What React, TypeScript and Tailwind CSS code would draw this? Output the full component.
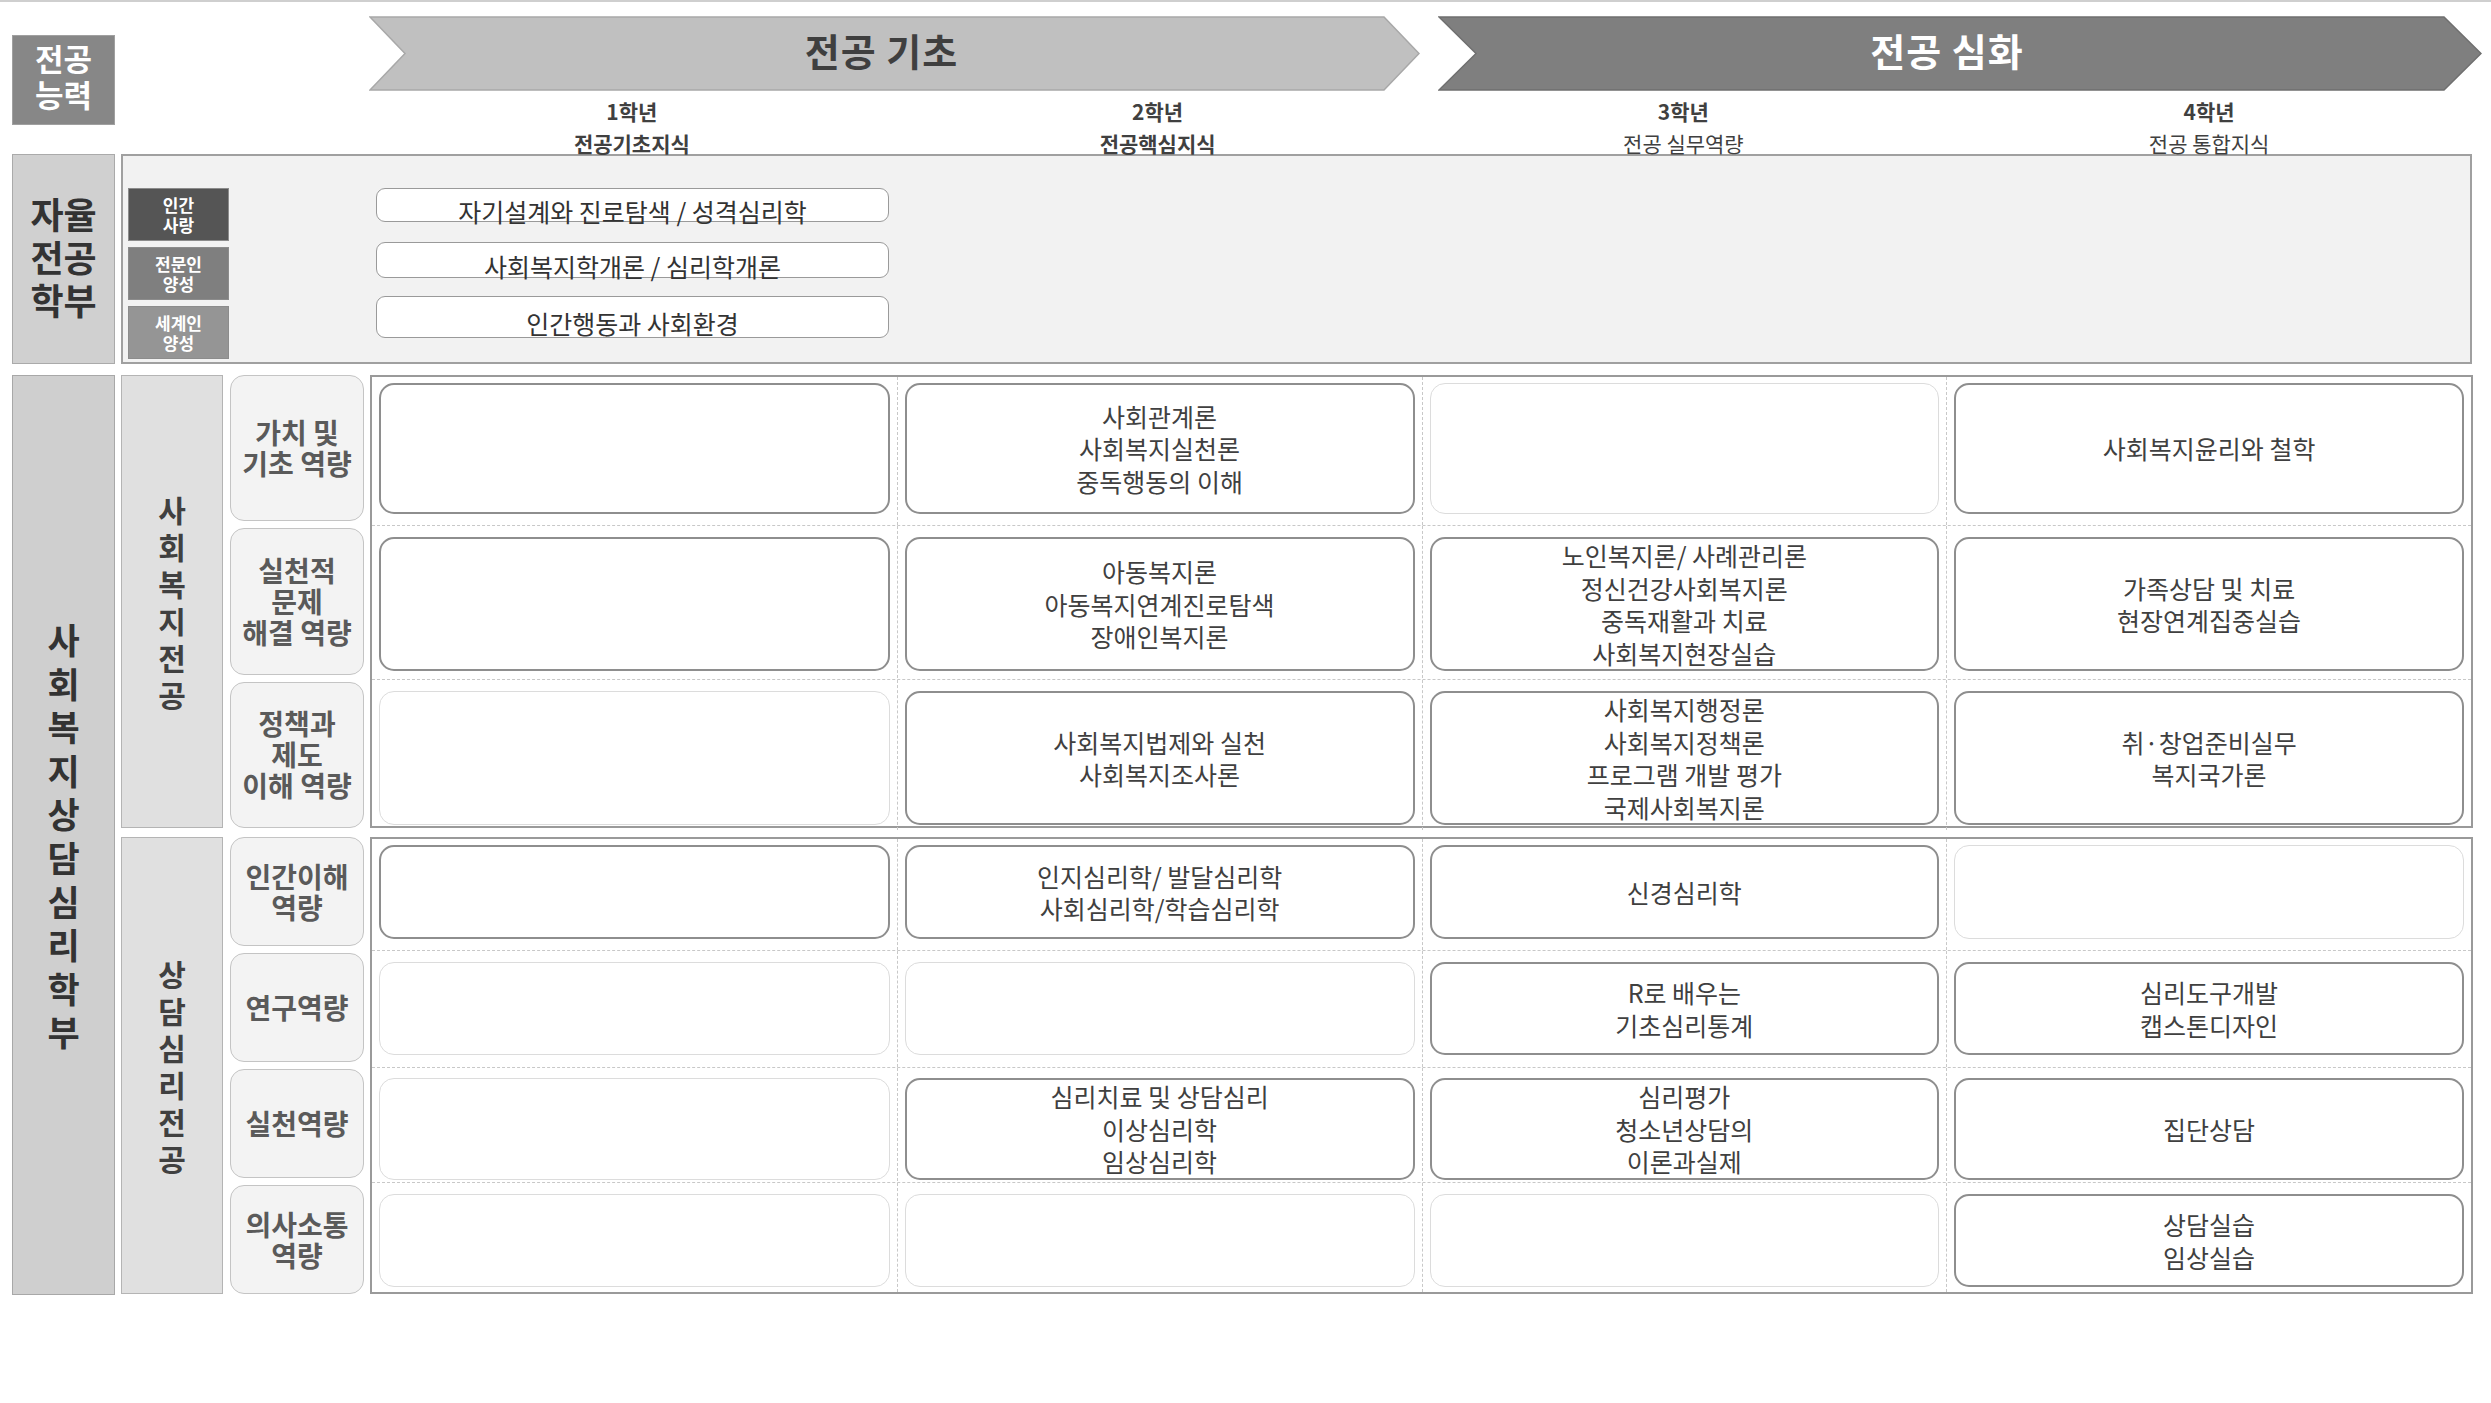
import React from 'react';

const FONT = "font-['Noto_Sans_CJK_KR','Noto_Sans',sans-serif]";

type Cell = { lines?: string[]; dark?: boolean };
type Row = { label: string[]; h: string; pad: string; cells: Cell[] };

const welfareRows: Row[] = [
  {
    label: ['가치 및', '기초 역량'],
    h: 'h-[148px]',
    pad: 'pt-[6px] pb-[11px]',
    cells: [
      { dark: true },
      { dark: true, lines: ['사회관계론', '사회복지실천론', '중독행동의 이해'] },
      {},
      { dark: true, lines: ['사회복지윤리와 철학'] },
    ],
  },
  {
    label: ['실천적', '문제', '해결 역량'],
    h: 'h-[154px]',
    pad: 'pt-[11px] pb-[12px]',
    cells: [
      { dark: true },
      { dark: true, lines: ['아동복지론', '아동복지연계진로탐색', '장애인복지론'] },
      { dark: true, lines: ['노인복지론/ 사례관리론', '정신건강사회복지론', '중독재활과 치료', '사회복지현장실습'] },
      { dark: true, lines: ['가족상담 및 치료', '현장연계집중실습'] },
    ],
  },
  {
    label: ['정책과', '제도', '이해 역량'],
    h: 'h-[147px]',
    pad: 'pt-[11px] pb-[5px]',
    cells: [
      {},
      { dark: true, lines: ['사회복지법제와 실천', '사회복지조사론'] },
      { dark: true, lines: ['사회복지행정론', '사회복지정책론', '프로그램 개발 평가', '국제사회복지론'] },
      { dark: true, lines: ['취·창업준비실무', '복지국가론'] },
    ],
  },
];

const counselRows: Row[] = [
  {
    label: ['인간이해', '역량'],
    h: 'h-[111px]',
    pad: 'pt-[6px] pb-[11px]',
    cells: [
      { dark: true },
      { dark: true, lines: ['인지심리학/ 발달심리학', '사회심리학/학습심리학'] },
      { dark: true, lines: ['신경심리학'] },
      {},
    ],
  },
  {
    label: ['연구역량'],
    h: 'h-[117px]',
    pad: 'pt-[11px] pb-[12px]',
    cells: [{}, {}, { dark: true, lines: ['R로 배우는', '기초심리통계'] }, { dark: true, lines: ['심리도구개발', '캡스톤디자인'] }],
  },
  {
    label: ['실천역량'],
    h: 'h-[115px]',
    pad: 'pt-[10px] pb-[11px]',
    cells: [
      {},
      { dark: true, lines: ['심리치료 및 상담심리', '이상심리학', '임상심리학'] },
      { dark: true, lines: ['심리평가', '청소년상담의', '이론과실제'] },
      { dark: true, lines: ['집단상담'] },
    ],
  },
  {
    label: ['의사소통', '역량'],
    h: 'h-[110px]',
    pad: 'pt-[11px] pb-[5px]',
    cells: [{}, {}, {}, { dark: true, lines: ['상담실습', '임상실습'] }],
  },
];

function Chevron({ width, depth, fill, stroke, children, textClass }: { width: number; depth: number; fill: string; stroke: string; children: React.ReactNode; textClass: string }) {
  const h = 75;
  const pts = `1,1 ${width - depth},1 ${width - 1},${h / 2} ${width - depth},${h - 1} 1,${h - 1} ${depth},${h / 2}`;
  return (
    <div className="relative h-[75px] shrink-0" style={{ width }}>
      <svg className="absolute inset-0" width={width} height={h} viewBox={`0 0 ${width} ${h}`}>
        <polygon points={pts} fill={fill} stroke={stroke} strokeWidth="1.5" />
      </svg>
      <div className={`relative h-full flex items-center justify-center pr-[26px] pb-[8px] text-[38px] font-bold tracking-[1px] ${textClass}`}>{children}</div>
    </div>
  );
}

function CourseCard({ cell }: { cell: Cell }) {
  return (
    <div
      className={`h-full rounded-[15px] bg-white flex flex-col items-center justify-center text-[25px] leading-[32.5px] text-[#404040] ${
        cell.dark ? 'border-2 border-[#8e8e8e]' : 'border-[1.5px] border-[#dcdcdc]'
      }`}
    >
      {cell.lines?.map((l) => (
        <span key={l} className="whitespace-nowrap">{l}</span>
      ))}
    </div>
  );
}

function Block({ title, rows }: { title: string; rows: Row[] }) {
  return (
    <div className="flex gap-[6px] h-full">
      {/* major label */}
      <div className="w-[102px] shrink-0 bg-[#e0e0e0] border-[1.5px] border-[#b4b4b4] flex flex-col items-center justify-center text-[30px] leading-[37px] font-bold text-[#404040]">
        {title.split('').map((c, i) => (
          <span key={i}>{c}</span>
        ))}
      </div>
      {/* competency labels */}
      <div className="w-[134px] shrink-0 flex flex-col gap-[7px] ml-[1px]">
        {rows.map((r) => (
          <div
            key={r.label.join('')}
            className="flex-1 rounded-[14px] bg-[#f3f3f3] border-[1.5px] border-[#c4c4c4] flex flex-col items-center justify-center text-[28px] leading-[31px] font-semibold text-[#5a5a5a]"
          >
            {r.label.map((l) => (
              <span key={l} className="whitespace-nowrap">{l}</span>
            ))}
          </div>
        ))}
      </div>
      {/* course grid */}
      <div className="w-[2103px] shrink-0 border-2 border-[#9a9a9a] bg-white flex flex-col">
        {rows.map((r, ri) => (
          <div key={ri} className={`${r.h} grid grid-cols-4 ${ri > 0 ? 'border-t border-dashed border-[#c8c8c8]' : ''}`}>
            {r.cells.map((c, ci) => (
              <div key={ci} className={`px-[7px] ${r.pad} ${ci > 0 ? 'border-l border-dashed border-[#c8c8c8]' : ''}`}>
                <CourseCard cell={c} />
              </div>
            ))}
          </div>
        ))}
      </div>
    </div>
  );
}

export default function App() {
  const years = [
    { y: '1학년', s: '전공기초지식', bold: true },
    { y: '2학년', s: '전공핵심지식', bold: true },
    { y: '3학년', s: '전공 실무역량', bold: false },
    { y: '4학년', s: '전공 통합지식', bold: false },
  ];
  return (
    <div className={`w-[2491px] h-[1403px] bg-white border-t-2 border-[#cfcfcf] pl-[12px] overflow-hidden ${FONT}`}>
      {/* header */}
      <div className="relative z-10 flex h-[152px]">
        <div className="w-[103px] shrink-0 pt-[33px]">
          <div className="h-[90px] bg-[#878787] border border-[#a0a0a0] flex flex-col items-center justify-center pb-[8px] text-[31px] leading-[36px] font-bold text-white">
            <span>전공</span>
            <span>능력</span>
          </div>
        </div>
        <div className="ml-[254px] w-[2103px] shrink-0 flex flex-col">
          <div className="flex gap-[18px] pt-[14px]">
            <Chevron width={1051} depth={36} fill="#c0c0c0" stroke="#a8a8a8" textClass="text-[#3f3f3f]">
              전공 기초
            </Chevron>
            <Chevron width={1044} depth={38} fill="#7f7f7f" stroke="#6f6f6f" textClass="text-white">
              전공 심화
            </Chevron>
          </div>
          <div className="grid grid-cols-4 pt-[4px] text-[21px] leading-[32px] text-[#404040]">
            {years.map((y) => (
              <div key={y.y} className="flex flex-col items-center">
                <span className="font-bold">{y.y}</span>
                <span className={y.bold ? 'font-semibold' : 'font-normal'}>{y.s}</span>
              </div>
            ))}
          </div>
        </div>
      </div>

      {/* 자율전공학부 */}
      <div className="flex gap-[6px] h-[210px]">
        <div className="w-[103px] shrink-0 bg-[#d0d0d0] border-[1.5px] border-[#aaaaaa] flex flex-col items-center justify-center pb-[6px] text-[36px] leading-[43px] font-bold text-[#333333]">
          <span>자율</span>
          <span>전공</span>
          <span>학부</span>
        </div>
        <div className="w-[2351px] shrink-0 bg-[#f2f2f2] border-2 border-[#a0a0a0] flex items-start pt-[32px] pl-[5px]">
          <div className="w-[101px] flex flex-col gap-[6px] text-[17px] leading-[20px] font-semibold text-white">
            {[
              ['인간', '사랑', 'bg-[#555555]'],
              ['전문인', '양성', 'bg-[#7f7f7f]'],
              ['세계인', '양성', 'bg-[#959595]'],
            ].map(([a, b, bg]) => (
              <div key={a} className={`h-[53px] ${bg} border border-[#8c8c8c] flex flex-col items-center justify-center`}>
                <span>{a}</span>
                <span>{b}</span>
              </div>
            ))}
          </div>
          <div className="ml-[147px] w-[513px] flex flex-col text-[25px] leading-[28px] text-[#333333]">
            {[
              ['자기설계와 진로탐색 / 성격심리학', 'h-[34px]'],
              ['사회복지학개론 / 심리학개론', 'h-[36px] mt-[20px]'],
              ['인간행동과 사회환경', 'h-[42px] mt-[18px]'],
            ].map(([t, cls]) => (
              <div key={t} className={`${cls} bg-white border-[1.5px] border-[#9a9a9a] rounded-[9px] flex items-center justify-center pt-[12px]`}>
                <span className="whitespace-nowrap">{t}</span>
              </div>
            ))}
          </div>
        </div>
      </div>

      {/* 사회복지상담심리학부 */}
      <div className="flex gap-[6px] mt-[11px] h-[920px]">
        <div className="w-[103px] shrink-0 bg-[#cfcfcf] border-[1.5px] border-[#a8a8a8] flex flex-col items-center justify-center text-[35px] leading-[43.6px] font-bold text-[#333333]">
          {'사회복지상담심리학부'.split('').map((c, i) => (
            <span key={i}>{c}</span>
          ))}
        </div>
        <div className="flex flex-col gap-[9px]">
          <div className="h-[453px]">
            <Block title="사회복지전공" rows={welfareRows} />
          </div>
          <div className="h-[457px]">
            <Block title="상담심리전공" rows={counselRows} />
          </div>
        </div>
      </div>
    </div>
  );
}
